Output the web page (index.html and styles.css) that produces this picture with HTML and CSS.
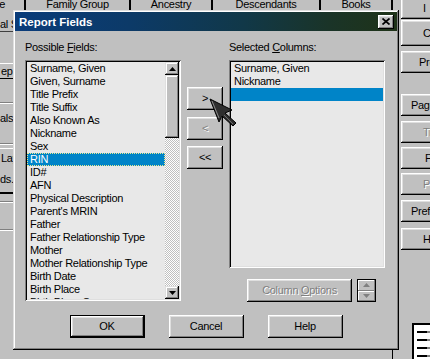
FILE: index.html
```html
<!doctype html>
<html>
<head>
    <title>Report Fields</title>
    <link rel="stylesheet" href="styles.css">
</head>
<body>
    <div class="app">
        <div class="app-main">
            <div class="tabs">
                <div class="tab tab-first">Page</div>
                <div class="tab tab-family">Family Group</div>
                <div class="tab tab-ancestry">Ancestry</div>
                <div class="tab tab-desc">Descendants</div>
                <div class="tab tab-books">Books</div>
            </div>
            <div class="workspace">
                <div class="left-strip">
                    <div class="ls-title">al S</div>
                    <div class="ls-box">ep</div>
                    <div class="ls-groove"></div>
                    <div class="ls-text">als:</div>
                    <div class="ls-groove ls-groove-tight"></div>
                    <div class="ls-box ls-lay">Lay</div>
                    <div class="ls-text ls-ds">ds..</div>
                    <div class="ls-dark"></div>
                    <div class="ls-groove ls-g2"></div>
                    <div class="ls-groove ls-g3"></div>
                </div>
            </div>
        </div>
        <div class="side-right">
            <div class="side-btn sb1">I</div>
            <div class="side-btn sb2">Create</div>
            <div class="side-btn sb3">Preview</div>
            <div class="side-btn sb4">Page Setup</div>
            <div class="side-btn sb5 off">Titles</div>
            <div class="side-btn sb6">Fonts</div>
            <div class="side-btn sb7 off">Publish</div>
            <div class="side-btn sb8">Preferences</div>
            <div class="side-btn sb9">Help</div>
            <div class="doc-icon">
                <span></span><span></span><span></span><span></span>
            </div>
        </div>
    </div>

    <div class="dialog">
        <div class="titlebar">
            <span class="title">Report Fields</span>
            <span class="close-btn">
                <svg width="8" height="7" viewBox="0 0 8 7"><path d="M0.5 0.5 L7.5 6.5 M7.5 0.5 L0.5 6.5" stroke="#000" stroke-width="1.7" fill="none"/></svg>
            </span>
        </div>
        <div class="dlg-body">
            <div class="columns">
                <div class="col-list">
                    <div class="label">Possible <u>F</u>ields:</div>
                    <div class="listbox possible">
                        <ul class="items">
                            <li>Surname, Given</li>
                            <li>Given, Surname</li>
                            <li>Title Prefix</li>
                            <li>Title Suffix</li>
                            <li>Also Known As</li>
                            <li>Nickname</li>
                            <li>Sex</li>
                            <li class="sel focus">RIN</li>
                            <li>ID#</li>
                            <li>AFN</li>
                            <li>Physical Description</li>
                            <li>Parent's MRIN</li>
                            <li>Father</li>
                            <li>Father Relationship Type</li>
                            <li>Mother</li>
                            <li>Mother Relationship Type</li>
                            <li>Birth Date</li>
                            <li>Birth Place</li>
                            <li>Birth Place Source</li>
                        </ul>
                        <div class="scrollbar">
                            <div class="sb-btn">
                                <svg width="7" height="4" viewBox="0 0 7 4"><path d="M3.5 0 L7 4 L0 4 Z" fill="#000"/></svg>
                            </div>
                            <div class="sb-thumb"></div>
                            <div class="sb-track"></div>
                            <div class="sb-btn">
                                <svg width="7" height="4" viewBox="0 0 7 4"><path d="M0 0 L7 0 L3.5 4 Z" fill="#000"/></svg>
                            </div>
                        </div>
                    </div>
                </div>
                <div class="col-mid">
                    <div class="btn btn-move">&gt;</div>
                    <div class="btn btn-move off">&lt;</div>
                    <div class="btn btn-move">&lt;&lt;</div>
                </div>
                <div class="col-list">
                    <div class="label">Selected <u>C</u>olumns:</div>
                    <div class="listbox selected">
                        <ul class="items">
                            <li>Surname, Given</li>
                            <li>Nickname</li>
                            <li class="sel">&nbsp;</li>
                        </ul>
                    </div>
                    <div class="options-row">
                        <div class="btn btn-options off">Column <u>O</u>ptions</div>
                        <div class="spin">
                            <span class="spin-btn">
                                <svg width="7" height="4" viewBox="0 0 7 4"><path d="M3.5 0 L7 4 L0 4 Z" fill="#808080"/></svg>
                            </span>
                            <span class="spin-btn">
                                <svg width="7" height="4" viewBox="0 0 7 4"><path d="M0 0 L7 0 L3.5 4 Z" fill="#808080"/></svg>
                            </span>
                        </div>
                    </div>
                </div>
            </div>
            <div class="actions">
                <div class="btn btn-action btn-default">OK</div>
                <div class="btn btn-action">Cancel</div>
                <div class="btn btn-action">Help</div>
            </div>
        </div>
    </div>

    <svg class="cursor" width="36" height="36" viewBox="0 0 36 36">
        <path d="M5 6 L27 17 L20 20 L31 30 L28 33 L17 23 L14 29 Z" fill="#2e2e2e" stroke="#000" stroke-width="1"/>
        <path d="M7 8 L14 25" stroke="#8a8a8a" stroke-width="1" fill="none"/>
        <path d="M19 22 L28 31" stroke="#6a6a6a" stroke-width="1" fill="none"/>
    </svg>
</body>
</html>
```

FILE: styles.css
```css
* {
    box-sizing: border-box;
}
html, body {
    margin: 0;
    padding: 0;
    overflow: hidden;
}
body {
    width: 430px;
    height: 359px;
    position: relative;
    background: #c0c0c0;
    font-family: "Liberation Sans", Arial, sans-serif;
    font-size: 11px;
    letter-spacing: -0.3px;
    color: #000;
}
ul {
    list-style: none;
    margin: 0;
    padding: 0;
}

/* background application */
.app {
    display: flex;
    height: 359px;
}
.app-main {
    width: 393px;
    flex-shrink: 0;
    display: flex;
    flex-direction: column;
}
.tabs {
    display: flex;
    height: 10px;
    overflow: hidden;
}
.tab {
    flex-shrink: 0;
    line-height: 9px;
    text-align: center;
    white-space: nowrap;
    overflow: hidden;
    border-right: 2px solid #000;
}
.tab-first {
    width: 26px;
    display: flex;
    justify-content: flex-end;
    padding-right: 19px;
}
.tab-family { width: 105px; }
.tab-ancestry { width: 82px; }
.tab-desc { width: 108px; }
.tab-books { width: 72px; }

.workspace {
    flex: 1;
    border-right: 1px solid #000;
}
.left-strip {
    width: 40px;
    display: flex;
    flex-direction: column;
    white-space: nowrap;
}
.ls-title {
    height: 22px;
    padding-top: 8px;
    line-height: 13px;
    border-bottom: 1px solid #404040;
}
.ls-box {
    margin-top: 31px;
    height: 16px;
    line-height: 14px;
    border-top: 1px solid #fff;
    border-bottom: 1px solid #000;
    padding-left: 1px;
}
.ls-groove {
    margin-top: 23px;
    height: 2px;
    border-top: 1px solid #808080;
    border-bottom: 1px solid #fff;
}
.ls-groove-tight {
    margin-top: 0;
}
.ls-text {
    height: 39px;
    line-height: 29px;
}
.ls-lay {
    margin-top: 3px;
    height: 22px;
    padding-top: 3px;
    line-height: 13px;
    border-bottom: none;
}
.ls-ds {
    height: 22px;
    line-height: 18px;
}
.ls-dark {
    height: 2px;
    background: #000;
}
.ls-g2 {
    margin-top: 7px;
}
.ls-g3 {
    margin-top: 26px;
}

.side-right {
    width: 37px;
    flex-shrink: 0;
    padding-left: 8px;
    display: flex;
    flex-direction: column;
}
.side-btn {
    flex-shrink: 0;
    width: 75px;
    height: 22px;
    line-height: 22px;
    padding-left: 22px;
    white-space: nowrap;
    box-shadow: inset -1px -1px #000, inset 1px 1px #fff, inset -2px -2px #808080, inset 2px 2px #dfdfdf;
}
.side-btn.off {
    color: #808080;
    text-shadow: 1px 1px #fff;
}
.sb1 { margin-top: -5px; height: 24px; line-height: 26px; }
.sb2 { margin-top: 1px; height: 26px; line-height: 26px; }
.sb3 { margin-top: 5px; padding-left: 18px; }
.sb4 { margin-top: 21px; padding-left: 10px; }
.sb5 { margin-top: 5px; }
.sb6 { margin-top: 4px; padding-left: 24px; }
.sb7 { margin-top: 4px; }
.sb8 { margin-top: 5px; padding-left: 10px; }
.sb9 { margin-top: 6px; }
.doc-icon {
    margin-top: auto;
    margin-left: 11px;
    width: 30px;
    height: 36px;
    background: #fff;
    border-left: 2px solid #000;
    border-top: 2px solid #000;
    display: flex;
    flex-direction: column;
    gap: 6px;
    padding: 6px 0 0 3px;
}
.doc-icon span {
    display: block;
    height: 2px;
    width: 20px;
    background: linear-gradient(90deg, #000 0 10px, #808080 10px);
}

/* dialog window */
.dialog {
    position: absolute;
    left: 13px;
    top: 10px;
    width: 386px;
    height: 340px;
    padding: 2px;
    background: #c0c0c0;
    box-shadow: inset -1px -1px #000, inset 1px 1px #dfdfdf, inset -2px -2px #808080, inset 2px 2px #fff;
}
.titlebar {
    height: 19px;
    display: flex;
    align-items: center;
    justify-content: space-between;
    padding: 0 3px 0 4px;
    background: linear-gradient(90deg, #0a3c7a 0%, #0c3a68 30%, #113848 60%, #1a3428 82%, #1f3318 100%);
}
.title {
    color: #fff;
    font-weight: bold;
    font-size: 11.5px;
    letter-spacing: 0;
}
.close-btn {
    width: 16px;
    height: 14px;
    display: flex;
    align-items: center;
    justify-content: center;
    background: #c0c0c0;
    box-shadow: inset -1px -1px #000, inset 1px 1px #fff, inset -2px -2px #808080, inset 2px 2px #dfdfdf;
}
.close-btn svg {
    display: block;
}
.dlg-body {
    padding-top: 10px;
}
.columns {
    display: flex;
    gap: 6px;
    padding-left: 10px;
}
.col-list {
    width: 156px;
    flex-shrink: 0;
}
.label {
    height: 13px;
    line-height: 13px;
    margin-bottom: 6px;
    white-space: nowrap;
}
.listbox {
    display: flex;
    padding: 2px;
    background: #e8e8e8;
    box-shadow: inset 1px 1px #808080, inset -1px -1px #fff, inset 2px 2px #000, inset -2px -2px #dfdfdf;
}
.possible {
    height: 241px;
}
.selected {
    height: 208px;
}
.items {
    flex: 1;
    overflow: hidden;
}
.items li {
    height: 13px;
    line-height: 13px;
    padding-left: 3px;
    white-space: nowrap;
}
.items li.sel {
    background: #0084c8;
    color: #fff;
}
.items li.focus {
    outline: 1px dotted #e8e890;
    outline-offset: -1px;
}
.scrollbar {
    width: 14px;
    display: flex;
    flex-direction: column;
}
.sb-btn {
    height: 13px;
    display: flex;
    align-items: center;
    justify-content: center;
    background: #c0c0c0;
    box-shadow: inset -1px -1px #000, inset 1px 1px #dfdfdf, inset -2px -2px #808080, inset 2px 2px #fff;
}
.sb-btn svg {
    display: block;
}
.sb-thumb {
    height: 63px;
    background: #c0c0c0;
    box-shadow: inset -1px -1px #000, inset 1px 1px #dfdfdf, inset -2px -2px #808080, inset 2px 2px #fff;
}
.sb-track {
    flex: 1;
    background: repeating-conic-gradient(#c0c0c0 0 25%, #fff 0 50%) 0 0 / 2px 2px;
}

.col-mid {
    width: 36px;
    flex-shrink: 0;
    display: flex;
    flex-direction: column;
    padding-top: 46px;
}
.btn {
    background: #c0c0c0;
    text-align: center;
    white-space: nowrap;
    box-shadow: inset -1px -1px #000, inset 1px 1px #fff, inset -2px -2px #808080, inset 2px 2px #dfdfdf;
}
.btn.off {
    color: #808080;
    text-shadow: 1px 1px #fff;
}
.btn-move {
    height: 23px;
    line-height: 23px;
}
.btn-move + .btn-move {
    margin-top: 7px;
}
.btn-move + .btn-move + .btn-move {
    margin-top: 6px;
}
.options-row {
    display: flex;
    gap: 5px;
    margin-top: 11px;
    padding-left: 18px;
}
.btn-options {
    width: 105px;
    height: 23px;
    line-height: 23px;
}
.spin {
    width: 19px;
    height: 23px;
    border: 1px solid #000;
    display: flex;
    flex-direction: column;
}
.spin-btn {
    flex: 1;
    display: flex;
    align-items: center;
    justify-content: center;
    box-shadow: inset -1px -1px #808080, inset 1px 1px #fff;
}
.spin-btn svg {
    display: block;
}
.actions {
    display: flex;
    justify-content: center;
    gap: 24px;
    margin-top: 13px;
}
.btn-action {
    width: 75px;
    height: 23px;
    line-height: 23px;
}
.btn-default {
    box-shadow: inset 0 0 0 1px #000, inset -2px -2px #000, inset 2px 2px #fff, inset -3px -3px #808080, inset 3px 3px #dfdfdf;
}

.cursor {
    position: absolute;
    left: 205px;
    top: 93px;
}
```
